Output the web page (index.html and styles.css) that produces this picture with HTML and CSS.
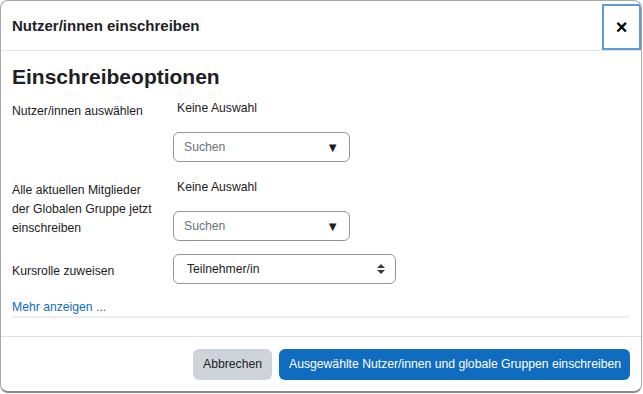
FILE: index.html
```html
<!DOCTYPE html>
<html lang="de">
<head>
  <meta charset="UTF-8">
  <title>Nutzer/innen einschreiben</title>
  <link rel="stylesheet" href="styles.css">
</head>
<body>

<div class="modal">
  <div class="modal-header">
    <h5 class="modal-title">Nutzer/innen einschreiben</h5>
    <button class="close">&times;</button>
  </div>

  <div class="modal-body">
    <h3>Einschreibeoptionen</h3>

    <!-- Nutzer/innen -->
    <div class="form-row">
      <div class="label">Nutzer/innen auswählen</div>
      <div class="field">
        <div class="selection">Keine Auswahl</div>
        <div class="search">
          <span>Suchen</span>
          <span class="arrow">&#9660;</span>
        </div>
      </div>
    </div>

    <!-- Globale Gruppen -->
    <div class="form-row">
      <div class="label">Alle aktuellen Mitglieder der Globalen Gruppe jetzt einschreiben</div>
      <div class="field">
        <div class="selection">Keine Auswahl</div>
        <div class="search">
          <span>Suchen</span>
          <span class="arrow">&#9660;</span>
        </div>
      </div>
    </div>

    <!-- Rolle -->
    <div class="form-row role-row">
      <div class="label">Kursrolle zuweisen</div>
      <div class="field">
        <div class="select">
          <span>Teilnehmer/in</span>
          <svg width="8" height="10" viewBox="0 0 8 10"><path d="M4 0 L8 4 H0 Z M4 10 L0 6 H8 Z" fill="#343a40"/></svg>
        </div>
      </div>
    </div>

    <a class="more" href="#">Mehr anzeigen ...</a>
  </div>

  <div class="modal-footer">
    <button class="btn btn-secondary">Abbrechen</button>
    <button class="btn btn-primary">Ausgewählte Nutzer/innen und globale Gruppen einschreiben</button>
  </div>
</div>

</body>
</html>
```

FILE: styles.css
```css
* { margin: 0; padding: 0; box-sizing: border-box; }
body { background: #fff; color: #1d2125; font-family: 'Liberation Sans', Arial, sans-serif; font-size: 12.2px; }

.modal { width: 642px; height: 393px; border: 1px solid #a8a8a8; border-bottom: 2px solid #8a8a8a; border-radius: 8px; background: #fff; display: flex; flex-direction: column; overflow: hidden; }

.modal-header { height: 50px; border-bottom: 1px solid #dee2e6; display: flex; justify-content: space-between; align-items: center; padding-left: 11px; padding-right: 0; }
.modal-title { font-size: 15px; font-weight: 700; color: #1d2125; }
.close { width: 39px; height: 46px; margin-top: 2px; border: 2px solid #5a9bd8; background: #fff; font-size: 20px; font-weight: 700; font-family: 'Liberation Sans', Arial, sans-serif; color: #000; line-height: 1; cursor: pointer; }

.modal-body { padding: 14px 11px 0 11px; flex: 1; }
.modal-body h3 { font-size: 21px; font-weight: 700; line-height: 24px; margin-bottom: 6px; }

.form-row { display: flex; margin-bottom: 12px; }
.label { width: 161px; padding-right: 12px; line-height: 19px; padding-top: 7px; }
.field { display: flex; flex-direction: column; }
.selection { line-height: 19px; padding-left: 4px; padding-top: 4px; margin-bottom: 14px; }

.search { width: 177px; height: 30px; border: 1px solid #8f959e; border-radius: 6px; display: flex; align-items: center; justify-content: space-between; padding: 0 10px 0 10px; color: #6a737b; }
.search .arrow { color: #1d2125; font-size: 13px; }

.role-row { margin-bottom: 14px; }
.role-row .label { padding-top: 9px; }
.role-row .field { padding-top: 1px; }
.select { width: 223px; height: 30px; border: 1px solid #8f959e; border-radius: 6px; display: flex; align-items: center; justify-content: space-between; padding: 0 10px 0 13px; }

.more { display: block; color: #0f6cbf; text-decoration: none; line-height: 18px; padding-bottom: 0; border-bottom: 2px solid #eceef0; margin-right: 1px; }

.modal-footer { height: 55px; border-top: 1px solid #dee2e6; display: flex; justify-content: flex-end; align-items: center; gap: 7px; padding-right: 11px; padding-top: 0; }
.btn { height: 31px; border: none; border-radius: 6px; font-family: 'Liberation Sans', Arial, sans-serif; font-size: 12.2px; padding: 0 10px; white-space: nowrap; cursor: pointer; }
.btn-secondary { background: #ced4da; color: #1d2125; width: 79px; }
.btn-primary { background: #0f6cbf; color: #fff; width: 351px; }
```
